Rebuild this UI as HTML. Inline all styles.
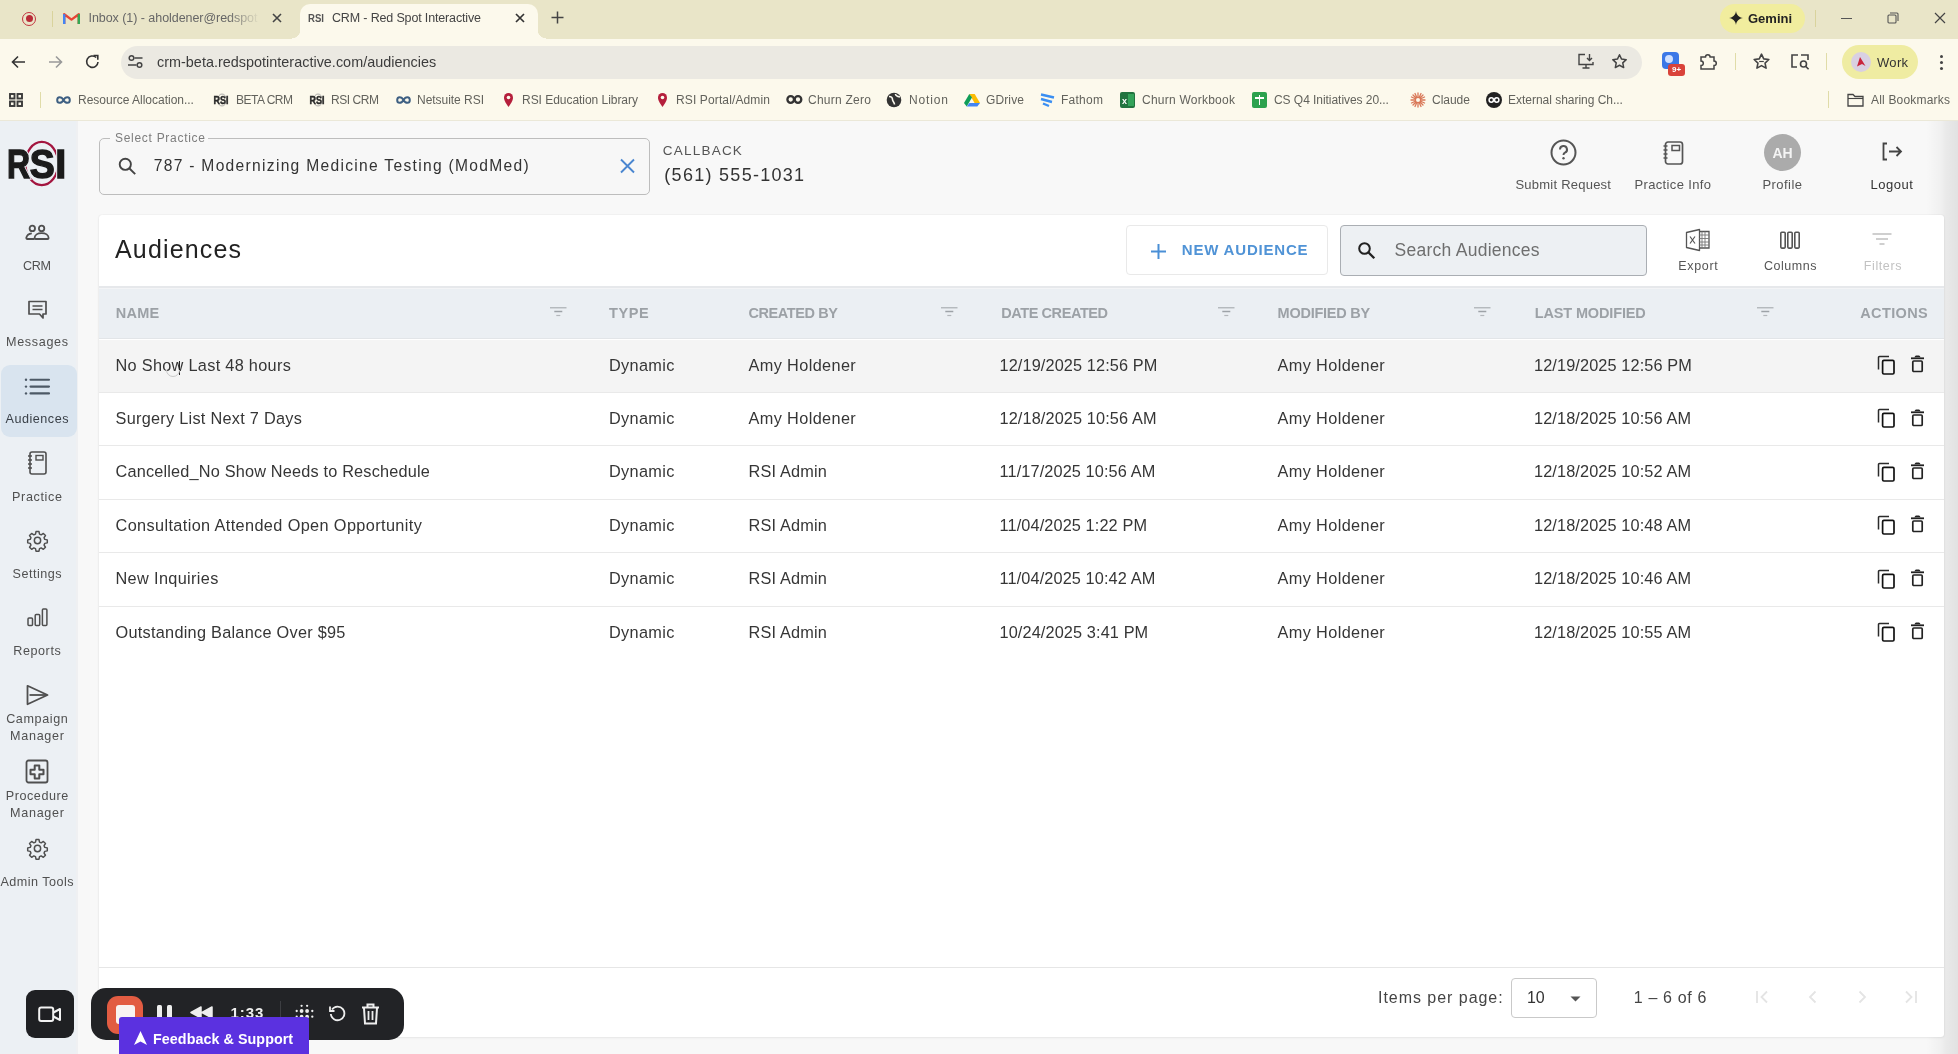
<!DOCTYPE html>
<html><head><meta charset="utf-8"><style>*{box-sizing:border-box;margin:0;padding:0}
html,body{width:1958px;height:1054px;overflow:hidden;background:#f6f6f6;font-family:"Liberation Sans",sans-serif}
.t{position:absolute;white-space:nowrap;line-height:1}
body{will-change:transform}
.a{position:absolute}
svg.a{overflow:visible}</style></head><body>
<div class="a" style="left:0;top:0;width:1958px;height:40px;background:#e9e5c8"></div>
<div class="a" style="left:0;top:39px;width:1958px;height:82px;background:#fcf9ec"></div>
<div class="a" style="left:0;top:120px;width:1958px;height:1px;background:#ebe8d8"></div>
<div class="a" style="left:22px;top:11.5px;width:14px;height:14px;border-radius:50%;border:1.8px solid #c2343f"></div>
<div class="a" style="left:25.5px;top:15px;width:7px;height:7px;border-radius:50%;background:#b92b38"></div>
<div class="a" style="left:52px;top:11px;width:1px;height:16px;background:#d9d39c"></div>
<svg class="a" style="left:63px;top:11px" width="17" height="14" viewBox="0 0 17 14"><path d="M1.2 13V3.2l7.3 5.4 7.3-5.4V13" fill="none" stroke="#ea4335" stroke-width="2.4" stroke-linejoin="round"/><path d="M1.2 13V3.2" stroke="#4285f4" stroke-width="2.4"/><path d="M15.8 13V3.2" stroke="#34a853" stroke-width="2.4"/></svg>
<div class="t" style="left:88.5px;top:12.42px;font-size:12.5px;color:#666;letter-spacing:-0.051px;">Inbox (1) - aholdener@redspot</div>
<div class="a" style="left:228px;top:6px;width:38px;height:28px;background:linear-gradient(90deg,rgba(233,229,200,0),#e9e5c8 85%)"></div>
<svg class="a" style="left:272px;top:13px" width="10" height="10" viewBox="0 0 10 10"><path d="M1 1l8 8M9 1L1 9" stroke="#444" stroke-width="1.6"/></svg>
<div class="a" style="left:300px;top:4px;width:238px;height:36px;background:#fcf9ec;border-radius:10px 10px 0 0"></div>
<div class="a" style="left:292px;top:30px;width:8px;height:10px;background:radial-gradient(circle at 0 0,#e9e5c8 8px,#fcf9ec 8.5px)"></div>
<div class="a" style="left:538px;top:30px;width:8px;height:10px;background:radial-gradient(circle at 100% 0,#e9e5c8 8px,#fcf9ec 8.5px)"></div>
<svg class="a" style="left:308px;top:11px" width="17" height="14" viewBox="0 0 17 14"><text x="0" y="11" font-family="Liberation Sans" font-weight="700" font-size="11" fill="#555" textLength="16" lengthAdjust="spacingAndGlyphs">RSI</text></svg>
<div class="t" style="left:332px;top:12.42px;font-size:12.5px;color:#444;letter-spacing:-0.154px;">CRM - Red Spot Interactive</div>
<svg class="a" style="left:515px;top:13px" width="10" height="10" viewBox="0 0 10 10"><path d="M1 1l8 8M9 1L1 9" stroke="#333" stroke-width="1.7"/></svg>
<svg class="a" style="left:551px;top:11px" width="13" height="13" viewBox="0 0 13 13"><path d="M6.5 0.5v12M0.5 6.5h12" stroke="#444" stroke-width="1.5"/></svg>
<div class="a" style="left:1720px;top:4px;width:85px;height:29px;border-radius:15px;background:#f1ed9e"></div>
<svg class="a" style="left:1729px;top:11px" width="14" height="14" viewBox="0 0 14 14"><path d="M7 0C7.5 4 10 6.5 14 7 10 7.5 7.5 10 7 14 6.5 10 4 7.5 0 7 4 6.5 6.5 4 7 0z" fill="#222"/></svg>
<div class="t" style="left:1748px;top:12.00px;font-size:13px;color:#222;font-weight:700;letter-spacing:-0.008px;">Gemini</div>
<div class="a" style="left:1815px;top:10px;width:1px;height:17px;background:#d9d39c"></div>
<div class="a" style="left:1841px;top:18px;width:11px;height:1px;background:#555"></div>
<svg class="a" style="left:1887px;top:12px" width="12" height="12" viewBox="0 0 12 12"><rect x="1" y="3" width="8" height="8" rx="1" fill="none" stroke="#555" stroke-width="1.1"/><path d="M3 1h7a1 1 0 0 1 1 1v7" fill="none" stroke="#555" stroke-width="1.1"/></svg>
<svg class="a" style="left:1934px;top:12px" width="12" height="12" viewBox="0 0 12 12"><path d="M1 1l10 10M11 1L1 11" stroke="#444" stroke-width="1.2"/></svg>
<svg class="a" style="left:10px;top:54px" width="17" height="16" viewBox="0 0 17 16"><path d="M15 8H2.5M8 2.5L2.5 8 8 13.5" fill="none" stroke="#333" stroke-width="1.6"/></svg>
<svg class="a" style="left:47px;top:54px" width="17" height="16" viewBox="0 0 17 16"><path d="M2 8h12.5M9 2.5L14.5 8 9 13.5" fill="none" stroke="#999" stroke-width="1.6"/></svg>
<svg class="a" style="left:84px;top:53px" width="17" height="17" viewBox="0 0 17 17"><path d="M14 9A5.7 5.7 0 1 1 12.2 4.5" fill="none" stroke="#333" stroke-width="1.6"/><path d="M9.5 2.5h4.3v4.3" fill="none" stroke="#333" stroke-width="1.6"/></svg>
<div class="a" style="left:121px;top:45.5px;width:1521px;height:33px;border-radius:17px;background:#ebe9e2"></div>
<svg class="a" style="left:127px;top:54px" width="17" height="15" viewBox="0 0 17 15"><circle cx="4.5" cy="4" r="2.3" fill="none" stroke="#444" stroke-width="1.5"/><path d="M7.5 4h8M1 11h8.5" stroke="#444" stroke-width="1.5"/><circle cx="12.5" cy="11" r="2.3" fill="none" stroke="#444" stroke-width="1.5"/></svg>
<div class="t" style="left:157px;top:54.81px;font-size:14.4px;color:#3c3c3c;letter-spacing:0.019px;">crm-beta.redspotinteractive.com/audiencies</div>
<svg class="a" style="left:1577px;top:53px" width="18" height="17" viewBox="0 0 18 17"><path d="M8 1.5H2v10h14V9M5.5 15h7M9 11.5V15" fill="none" stroke="#444" stroke-width="1.4"/><path d="M12.5 1v6.5M10 5l2.5 2.5L15 5" fill="none" stroke="#444" stroke-width="1.4"/></svg>
<svg class="a" style="left:1611px;top:53px" width="17" height="17" viewBox="0 0 24 24"><path d="M12 2.5l2.9 6.1 6.6.8-4.9 4.6 1.3 6.6L12 17.3l-5.9 3.3 1.3-6.6-4.9-4.6 6.6-.8z" fill="none" stroke="#444" stroke-width="2.1" stroke-linejoin="round"/></svg>
<div class="a" style="left:1662px;top:52px;width:17px;height:17px;border-radius:4px;background:#3b78e7"></div>
<div class="a" style="left:1665px;top:55px;width:8px;height:8px;border-radius:50%;background:#cfe0ff"></div>
<div class="a" style="left:1668px;top:64px;width:17px;height:12px;border-radius:3px;background:#d9433a;color:#fff;font-size:8px;line-height:12px;text-align:center;font-weight:700">9+</div>
<svg class="a" style="left:1699px;top:52px" width="19" height="19" viewBox="0 0 19 19"><path d="M2 5h4.5a2.3 2.3 0 0 1 4.6 0H15v4a2.3 2.3 0 0 1 0 4.6V17H2v-3.5a2.3 2.3 0 0 0 0-4.6z" fill="none" stroke="#444" stroke-width="1.5"/></svg>
<div class="a" style="left:1735px;top:53px;width:1px;height:17px;background:#e0dca8"></div>
<svg class="a" style="left:1752px;top:53px" width="19" height="17" viewBox="0 0 24 22"><path d="M12 1.5l2.9 6.1 6.6.8-4.9 4.6 1.3 6.6L12 16.3l-5.9 3.3 1.3-6.6-4.9-4.6 6.6-.8z" fill="none" stroke="#444" stroke-width="2.1" stroke-linejoin="round"/><path d="M9 11h6" stroke="#444" stroke-width="1.5"/></svg>
<svg class="a" style="left:1790px;top:53px" width="20" height="17" viewBox="0 0 20 17"><path d="M8 2H2v12h5M11 2h7v5" fill="none" stroke="#444" stroke-width="1.6"/><circle cx="13.5" cy="11" r="3" fill="none" stroke="#444" stroke-width="1.6"/><path d="M15.6 13.2l3 3" stroke="#444" stroke-width="1.6"/></svg>
<div class="a" style="left:1826px;top:53px;width:1px;height:17px;background:#e0dca8"></div>
<div class="a" style="left:1841.5px;top:45px;width:76px;height:33.5px;border-radius:17px;background:#efeca2"></div>
<div class="a" style="left:1851px;top:52px;width:20px;height:20px;border-radius:50%;background:#d9d0e2"></div>
<svg class="a" style="left:1853px;top:54px" width="16" height="16" viewBox="0 0 16 16"><path d="M4 12.5L7 3l5.5 9-3.5-2z" fill="#c8243c"/></svg>
<div class="t" style="left:1877px;top:56.00px;font-size:13px;color:#333;letter-spacing:0.310px;">Work</div>
<div class="a" style="left:1940px;top:55px;width:3px;height:3px;border-radius:50%;background:#444;box-shadow:0 6px 0 #444,0 12px 0 #444"></div>
<svg class="a" style="left:9px;top:93px" width="14" height="14" viewBox="0 0 14 14"><g fill="none" stroke="#3a3a3a" stroke-width="1.9"><rect x="1" y="1" width="4.5" height="4.5"/><rect x="8.5" y="1" width="4.5" height="4.5"/><rect x="1" y="8.5" width="4.5" height="4.5"/><rect x="8.5" y="8.5" width="4.5" height="4.5"/></g></svg>
<div class="a" style="left:40px;top:92px;width:1px;height:16px;background:#e0dca8"></div>
<svg class="a" style="left:56px;top:95px" width="15" height="10" viewBox="0 0 15 10"><path d="M7.5 5C5.5 1.2 1.2 1.2 1.2 5s4.3 3.8 6.3 0 6.3-3.8 6.3 0-4.3 3.8-6.3 0" fill="none" stroke="#3d5f82" stroke-width="2"/></svg>
<div class="t" style="left:78px;top:93.84px;font-size:12px;color:#62625c;letter-spacing:-0.005px;">Resource Allocation...</div>
<svg class="a" style="left:213px;top:92px" width="16" height="16" viewBox="0 0 16 16"><ellipse cx="9" cy="8" rx="4.5" ry="6" fill="none" stroke="#999" stroke-width="0.8"/><text x="0.5" y="12" font-family="Liberation Sans" font-weight="700" font-size="10" fill="#2a2a2a" stroke="#2a2a2a" stroke-width="0.4" textLength="15" lengthAdjust="spacingAndGlyphs">RSI</text></svg>
<div class="t" style="left:236px;top:93.84px;font-size:12px;color:#62625c;letter-spacing:-0.499px;">BETA CRM</div>
<svg class="a" style="left:309px;top:92px" width="16" height="16" viewBox="0 0 16 16"><ellipse cx="9" cy="8" rx="4.5" ry="6" fill="none" stroke="#999" stroke-width="0.8"/><text x="0.5" y="12" font-family="Liberation Sans" font-weight="700" font-size="10" fill="#2a2a2a" stroke="#2a2a2a" stroke-width="0.4" textLength="15" lengthAdjust="spacingAndGlyphs">RSI</text></svg>
<div class="t" style="left:331px;top:93.84px;font-size:12px;color:#62625c;letter-spacing:-0.452px;">RSI CRM</div>
<svg class="a" style="left:396px;top:95px" width="15" height="10" viewBox="0 0 15 10"><path d="M7.5 5C5.5 1.2 1.2 1.2 1.2 5s4.3 3.8 6.3 0 6.3-3.8 6.3 0-4.3 3.8-6.3 0" fill="none" stroke="#3d5f82" stroke-width="2"/></svg>
<div class="t" style="left:417px;top:93.84px;font-size:12px;color:#62625c;letter-spacing:-0.036px;">Netsuite RSI</div>
<svg class="a" style="left:503px;top:92px" width="11" height="16" viewBox="0 0 11 16"><path d="M5.5 15C2 10 1 8 1 5.5a4.5 4.5 0 0 1 9 0C10 8 9 10 5.5 15z" fill="#b51f3c"/><circle cx="5.5" cy="5.5" r="1.8" fill="#fcf9ec"/></svg>
<div class="t" style="left:522px;top:93.84px;font-size:12px;color:#62625c;letter-spacing:-0.039px;">RSI Education Library</div>
<svg class="a" style="left:657px;top:92px" width="11" height="16" viewBox="0 0 11 16"><path d="M5.5 15C2 10 1 8 1 5.5a4.5 4.5 0 0 1 9 0C10 8 9 10 5.5 15z" fill="#b51f3c"/><circle cx="5.5" cy="5.5" r="1.8" fill="#fcf9ec"/></svg>
<div class="t" style="left:676px;top:93.84px;font-size:12px;color:#62625c;letter-spacing:0.128px;">RSI Portal/Admin</div>
<svg class="a" style="left:786px;top:94px" width="17" height="11" viewBox="0 0 17 11"><circle cx="4.7" cy="5.5" r="3.3" fill="none" stroke="#333" stroke-width="2.3"/><circle cx="12" cy="5.5" r="3.3" fill="none" stroke="#333" stroke-width="2.3"/></svg>
<div class="t" style="left:808px;top:93.84px;font-size:12px;color:#62625c;letter-spacing:0.251px;">Churn Zero</div>
<svg class="a" style="left:886px;top:92px" width="16" height="16" viewBox="0 0 16 16"><circle cx="8" cy="8" r="7.3" fill="#333"/><path d="M3 4.5c2 0 3.5 1 3.5 3s2 2.5 2 5M9.5 2c0 2 2 2.5 4.5 3" fill="none" stroke="#fbf9ef" stroke-width="1.6"/></svg>
<div class="t" style="left:909px;top:93.84px;font-size:12px;color:#62625c;letter-spacing:0.855px;">Notion</div>
<svg class="a" style="left:964px;top:93px" width="16" height="14" viewBox="0 0 16 14"><path d="M5.3 1h5.4l5.3 9h-5.4z" fill="#fbbc04"/><path d="M5.3 1L0 10l2.7 3.5L8 4.5z" fill="#0f9d58"/><path d="M2.7 13.5h10.6L16 10H5.4z" fill="#4285f4"/></svg>
<div class="t" style="left:986px;top:93.84px;font-size:12px;color:#62625c;letter-spacing:0.123px;">GDrive</div>
<svg class="a" style="left:1040px;top:92px" width="15" height="16" viewBox="0 0 15 16"><path d="M1 2.5l13 3M1 7l11 3M3 11.5l6 2.5" stroke="#3a8ef2" stroke-width="2.4"/></svg>
<div class="t" style="left:1061px;top:93.84px;font-size:12px;color:#62625c;letter-spacing:0.255px;">Fathom</div>
<div class="a" style="left:1120px;top:92px;width:15px;height:16px;border-radius:2px;background:#21733f"></div>
<div class="a" style="left:1128px;top:94px;width:6px;height:12px;background:#33a35a"></div>
<div class="t" style="left:1122px;top:97px;font-size:9px;color:#fff;font-weight:700;line-height:1">x</div>
<div class="t" style="left:1142px;top:93.84px;font-size:12px;color:#62625c;letter-spacing:0.241px;">Churn Workbook</div>
<div class="a" style="left:1252px;top:92px;width:15px;height:16px;border-radius:2px;background:#2ca24e"></div>
<div class="a" style="left:1255px;top:97px;width:9px;height:1.6px;background:#fff"></div>
<div class="a" style="left:1258.5px;top:95px;width:1.6px;height:10px;background:#fff"></div>
<div class="t" style="left:1274px;top:93.84px;font-size:12px;color:#62625c;letter-spacing:-0.050px;">CS Q4 Initiatives 20...</div>
<svg class="a" style="left:1410px;top:92px" width="16" height="16" viewBox="0 0 16 16"><g stroke="#d97757" stroke-width="1.3" stroke-linecap="round"><path d="M8 1v14M1 8h14M3 3l10 10M13 3L3 13M5 1.5l6 13M11 1.5l-6 13M1.5 5l13 6M1.5 11l13-6"/></g><circle cx="8" cy="8" r="2" fill="#fcf9ec"/></svg>
<div class="t" style="left:1432px;top:93.84px;font-size:12px;color:#62625c;letter-spacing:-0.014px;">Claude</div>
<div class="a" style="left:1486px;top:92px;width:16px;height:16px;border-radius:50%;background:#222"></div>
<svg class="a" style="left:1488px;top:96px" width="12" height="8" viewBox="0 0 12 8"><circle cx="3.3" cy="4" r="2.2" fill="none" stroke="#fff" stroke-width="1.5"/><circle cx="8.7" cy="4" r="2.2" fill="none" stroke="#fff" stroke-width="1.5"/></svg>
<div class="t" style="left:1508px;top:93.84px;font-size:12px;color:#62625c;letter-spacing:-0.021px;">External sharing Ch...</div>
<div class="a" style="left:1828px;top:91px;width:1px;height:17px;background:#e0dca8"></div>
<svg class="a" style="left:1847px;top:93px" width="17" height="14" viewBox="0 0 17 14"><path d="M1 1.5h5l2 2h8v9.5H1z" fill="none" stroke="#444" stroke-width="1.3"/><path d="M1 5.5h15" stroke="#444" stroke-width="1.1"/></svg>
<div class="t" style="left:1871px;top:93.84px;font-size:12px;color:#62625c;letter-spacing:0.189px;">All Bookmarks</div>
<div class="a" style="left:0;top:121px;width:77px;height:933px;background:#ecf0f4"></div>
<div class="a" style="left:77px;top:121px;width:1881px;height:933px;background:#f8f8f8"></div>
<div class="a" style="left:76px;top:121px;width:2px;height:933px;background:#eff0f2"></div>
<div class="a" style="left:1926px;top:121px;width:32px;height:933px;background:linear-gradient(90deg,rgba(0,0,0,0) 0%,rgba(0,0,0,0.03) 45%,rgba(0,0,0,0.06) 62%,rgba(0,0,0,0.09) 100%)"></div>
<svg class="a" style="left:0;top:130px" width="77" height="70" viewBox="0 130 77 70"><ellipse cx="41.8" cy="163.5" rx="16.4" ry="21.6" fill="none" stroke="#a3153f" stroke-width="2.2"/><text x="7" y="178" font-family="Liberation Sans" font-weight="700" font-size="40" fill="#ecf0f4" stroke="#ecf0f4" stroke-width="3.5" textLength="23" lengthAdjust="spacingAndGlyphs">R</text><text x="29.8" y="178" font-family="Liberation Sans" font-weight="700" font-size="40" fill="#ecf0f4" stroke="#ecf0f4" stroke-width="3.5" textLength="25" lengthAdjust="spacingAndGlyphs">S</text><text x="55.3" y="178" font-family="Liberation Sans" font-weight="700" font-size="40" fill="#ecf0f4" stroke="#ecf0f4" stroke-width="3.5" textLength="11" lengthAdjust="spacingAndGlyphs">I</text><text x="7" y="178" font-family="Liberation Sans" font-weight="700" font-size="40" fill="#1b1b1b" stroke="#1b1b1b" stroke-width="1.4" textLength="23" lengthAdjust="spacingAndGlyphs">R</text><text x="29.8" y="178" font-family="Liberation Sans" font-weight="700" font-size="40" fill="#1b1b1b" stroke="#1b1b1b" stroke-width="1.4" textLength="25" lengthAdjust="spacingAndGlyphs">S</text><text x="55.3" y="178" font-family="Liberation Sans" font-weight="700" font-size="40" fill="#1b1b1b" stroke="#1b1b1b" stroke-width="1.4" textLength="11" lengthAdjust="spacingAndGlyphs">I</text></svg>
<div class="a" style="left:1px;top:365px;width:76px;height:72px;background:#d9e4ef;border-radius:9px"></div>
<svg class="a" style="left:25px;top:224px" width="24" height="17" viewBox="0 0 24 17"><circle cx="7.3" cy="4.4" r="2.7" fill="none" stroke="#4f4f4f" stroke-width="1.8"/><circle cx="16.6" cy="4.4" r="2.7" fill="none" stroke="#4f4f4f" stroke-width="1.8"/><path d="M9.5 15H2.3a1 1 0 0 1-1-1.2C1.8 11.2 3.8 9.6 6.8 9.3" fill="none" stroke="#4f4f4f" stroke-width="1.8"/><path d="M9.6 14c0-3 3-4.9 7-4.9s7 1.9 7 4.9a1 1 0 0 1-1 1H10.6a1 1 0 0 1-1-1z" fill="none" stroke="#4f4f4f" stroke-width="1.8"/></svg>
<div class="t" style="left:23.0px;top:259.63px;font-size:12.6px;color:#505050;letter-spacing:-0.340px;">CRM</div>
<svg class="a" style="left:27px;top:300px" width="21" height="20" viewBox="0 0 21 20"><path d="M2 1.5h17v12.5h-3v4l-3.5-4H2z" fill="none" stroke="#4f4f4f" stroke-width="1.7" stroke-linejoin="round"/><path d="M5.5 6h10M5.5 9.5h10" stroke="#4f4f4f" stroke-width="1.7"/></svg>
<div class="t" style="left:6.0px;top:335.63px;font-size:12.6px;color:#505050;letter-spacing:0.657px;">Messages</div>
<svg class="a" style="left:24px;top:377px" width="26" height="18" viewBox="0 0 26 18"><g fill="#4d5966"><circle cx="2" cy="2.8" r="1.2"/><circle cx="2" cy="9.6" r="1.2"/><circle cx="2" cy="16.4" r="1.2"/></g><path d="M6.5 2.8h18.5M6.5 9.6h18.5M6.5 16.4h18.5" stroke="#4d5966" stroke-width="2.1" stroke-linecap="round"/></svg>
<div class="t" style="left:5.5px;top:412.63px;font-size:12.6px;color:#3a4048;letter-spacing:0.524px;">Audiences</div>
<svg class="a" style="left:27px;top:451px" width="21" height="24" viewBox="0 0 21 24"><rect x="3" y="1" width="16" height="22" rx="2" fill="none" stroke="#4f4f4f" stroke-width="1.6"/><rect x="9" y="4.5" width="7" height="4.5" fill="none" stroke="#4f4f4f" stroke-width="1.4"/><path d="M1 5h4M1 9h4M1 13h4M1 17h4" stroke="#4f4f4f" stroke-width="1.4"/></svg>
<div class="t" style="left:12.0px;top:490.63px;font-size:12.6px;color:#505050;letter-spacing:0.644px;">Practice</div>
<svg class="a" style="left:26.5px;top:530px" width="21" height="21" viewBox="0 0 24 24"><path d="M10.3 1.8h3.4l.6 2.9 1.9.8 2.5-1.6 2.4 2.4-1.6 2.5.8 1.9 2.9.6v3.4l-2.9.6-.8 1.9 1.6 2.5-2.4 2.4-2.5-1.6-1.9.8-.6 2.9h-3.4l-.6-2.9-1.9-.8-2.5 1.6-2.4-2.4 1.6-2.5-.8-1.9-2.9-.6v-3.4l2.9-.6.8-1.9-1.6-2.5 2.4-2.4 2.5 1.6 1.9-.8z" fill="none" stroke="#4f4f4f" stroke-width="1.7" stroke-linejoin="round"/><circle cx="12" cy="12" r="3.6" fill="none" stroke="#4f4f4f" stroke-width="1.7"/></svg>
<div class="t" style="left:12.5px;top:567.63px;font-size:12.6px;color:#505050;letter-spacing:0.499px;">Settings</div>
<svg class="a" style="left:27px;top:608px" width="21" height="19" viewBox="0 0 21 19"><rect x="1" y="10" width="4.5" height="7.5" rx="1" fill="none" stroke="#4f4f4f" stroke-width="1.5"/><rect x="8.2" y="6.5" width="4.5" height="11" rx="1" fill="none" stroke="#4f4f4f" stroke-width="1.5"/><rect x="15.4" y="1" width="4.5" height="16.5" rx="1" fill="none" stroke="#4f4f4f" stroke-width="1.5"/></svg>
<div class="t" style="left:13.25px;top:644.63px;font-size:12.6px;color:#505050;letter-spacing:0.566px;">Reports</div>
<svg class="a" style="left:25px;top:684px" width="24" height="22" viewBox="0 0 24 22"><path d="M2.5 1.8L22.5 11 2.5 20.2z" fill="none" stroke="#4f4f4f" stroke-width="1.8" stroke-linejoin="round"/><path d="M4.5 11h17" stroke="#4f4f4f" stroke-width="1.8"/></svg>
<div class="t" style="left:6.15px;top:713.03px;font-size:12.6px;color:#505050;letter-spacing:0.615px;">Campaign</div>
<div class="t" style="left:10.1px;top:729.63px;font-size:12.6px;color:#505050;letter-spacing:0.682px;">Manager</div>
<svg class="a" style="left:25px;top:759px" width="24" height="25" viewBox="0 0 24 25"><rect x="1.5" y="1.5" width="21" height="22" rx="2" fill="none" stroke="#4f4f4f" stroke-width="1.8"/><path d="M9.7 6.5h4.6v4.2h4.2v4.6h-4.2v4.2H9.7v-4.2H5.5v-4.6h4.2z" fill="none" stroke="#4f4f4f" stroke-width="2" stroke-linejoin="round"/></svg>
<div class="t" style="left:5.7px;top:790.23px;font-size:12.6px;color:#505050;letter-spacing:0.562px;">Procedure</div>
<div class="t" style="left:10.1px;top:806.63px;font-size:12.6px;color:#505050;letter-spacing:0.682px;">Manager</div>
<svg class="a" style="left:26.5px;top:837.5px" width="21" height="21" viewBox="0 0 24 24"><path d="M10.3 1.8h3.4l.6 2.9 1.9.8 2.5-1.6 2.4 2.4-1.6 2.5.8 1.9 2.9.6v3.4l-2.9.6-.8 1.9 1.6 2.5-2.4 2.4-2.5-1.6-1.9.8-.6 2.9h-3.4l-.6-2.9-1.9-.8-2.5 1.6-2.4-2.4 1.6-2.5-.8-1.9-2.9-.6v-3.4l2.9-.6.8-1.9-1.6-2.5 2.4-2.4 2.5 1.6 1.9-.8z" fill="none" stroke="#4f4f4f" stroke-width="1.7" stroke-linejoin="round"/><circle cx="12" cy="12" r="3.6" fill="none" stroke="#4f4f4f" stroke-width="1.7"/></svg>
<div class="t" style="left:0.5px;top:875.63px;font-size:12.6px;color:#505050;letter-spacing:0.463px;">Admin Tools</div>
<div class="a" style="left:98.5px;top:137.5px;width:551px;height:57px;border:1.2px solid #bdbdbd;border-radius:5px;background:#f7f7f7"></div>
<div class="a" style="left:110px;top:133px;width:98px;height:10px;background:#f8f8f8"></div>
<div class="t" style="left:115px;top:132.14px;font-size:12px;color:#7d7d7d;letter-spacing:0.708px;">Select Practice</div>
<svg class="a" style="left:118px;top:157px" width="19" height="18" viewBox="0 0 19 18"><circle cx="7.3" cy="7.3" r="5.6" fill="none" stroke="#444" stroke-width="1.9"/><path d="M11.5 11.5l5.7 5.7" stroke="#444" stroke-width="1.9"/></svg>
<div class="t" style="left:153.7px;top:158.39px;font-size:15.6px;color:#333;letter-spacing:1.299px;">787 - Modernizing Medicine Testing (ModMed)</div>
<svg class="a" style="left:620px;top:159px" width="15" height="14" viewBox="0 0 15 14"><path d="M1 0.5l13 13M14 0.5L1 13.5" stroke="#4a86d0" stroke-width="1.9"/></svg>
<div class="t" style="left:662.8px;top:144.17px;font-size:13.5px;color:#555;letter-spacing:1.219px;">CALLBACK</div>
<div class="t" style="left:664.3px;top:165.86px;font-size:18px;color:#333;letter-spacing:1.288px;">(561) 555-1031</div>
<svg class="a" style="left:1550px;top:139px" width="27" height="27" viewBox="0 0 27 27"><circle cx="13.5" cy="13.5" r="12" fill="none" stroke="#555" stroke-width="2"/><path d="M10 10.5a3.5 3.5 0 1 1 5 3.2c-1 .5-1.5 1-1.5 2.3" fill="none" stroke="#555" stroke-width="2"/><circle cx="13.5" cy="19.3" r="1.2" fill="#555"/></svg>
<div class="t" style="left:1515.43px;top:178.00px;font-size:13px;color:#555;letter-spacing:0.234px;">Submit Request</div>
<svg class="a" style="left:1662px;top:141px" width="22" height="24" viewBox="0 0 22 24"><rect x="3.5" y="1" width="17" height="22" rx="2.5" fill="none" stroke="#555" stroke-width="1.7"/><rect x="10" y="4.5" width="7.5" height="5" fill="none" stroke="#555" stroke-width="1.5"/><path d="M1.5 5h4M1.5 9h4M1.5 13h4M1.5 17h4" stroke="#555" stroke-width="1.5"/></svg>
<div class="t" style="left:1634.43px;top:178.00px;font-size:13px;color:#555;letter-spacing:0.356px;">Practice Info</div>
<div class="a" style="left:1764px;top:134px;width:37px;height:37px;border-radius:50%;background:#ababab"></div>
<div class="t" style="left:1764px;top:146px;width:37px;text-align:center;font-size:14px;font-weight:700;color:#f4f4f4;line-height:1">AH</div>
<div class="t" style="left:1762.43px;top:178.00px;font-size:13px;color:#555;letter-spacing:0.447px;">Profile</div>
<svg class="a" style="left:1882px;top:142px" width="21" height="19" viewBox="0 0 21 19"><path d="M5 1.5H1.5v16H5" fill="none" stroke="#444" stroke-width="1.8"/><path d="M7 9.5h12M14.5 5l4.5 4.5-4.5 4.5" fill="none" stroke="#444" stroke-width="1.8"/></svg>
<div class="t" style="left:1870.48px;top:178.00px;font-size:13px;color:#333;letter-spacing:0.535px;">Logout</div>
<div class="a" style="left:98.5px;top:215px;width:1845px;height:821.5px;background:#fff;border-radius:3px;box-shadow:0 1px 3px rgba(0,0,0,0.06),0 0 1.5px rgba(0,0,0,0.1)"></div>
<div class="t" style="left:115px;top:237.44px;font-size:25px;color:#222;letter-spacing:1.156px;">Audiences</div>
<div class="a" style="left:1125.5px;top:224.5px;width:202px;height:50.5px;border:1px solid #e9e9e9;border-radius:4px;background:#fff"></div>
<svg class="a" style="left:1150px;top:242.5px" width="17" height="17" viewBox="0 0 17 17"><path d="M8.5 1v15M1 8.5h15" stroke="#4a8fd6" stroke-width="2"/></svg>
<div class="t" style="left:1181.8px;top:242.30px;font-size:15px;color:#5093d6;font-weight:700;letter-spacing:0.804px;">NEW AUDIENCE</div>
<div class="a" style="left:1339.5px;top:224.5px;width:307px;height:51.5px;border:1.2px solid #aaaeb3;border-radius:4px;background:#edf0f3"></div>
<svg class="a" style="left:1357px;top:241px" width="20" height="19" viewBox="0 0 20 19"><circle cx="7.5" cy="7.5" r="5.3" fill="none" stroke="#222" stroke-width="2"/><path d="M11.3 11.3l6 6" stroke="#222" stroke-width="2.3"/></svg>
<div class="t" style="left:1394.5px;top:241.69px;font-size:17.5px;color:#6e6e6e;letter-spacing:0.268px;">Search Audiences</div>
<svg class="a" style="left:1685px;top:228px" width="26" height="24" viewBox="0 0 26 24"><path d="M1.5 4.5L14.5 1.5v21l-13-3z" fill="none" stroke="#555" stroke-width="1.3" stroke-linejoin="round"/><path d="M14.5 3.5h9.5v16.5h-9.5" fill="none" stroke="#555" stroke-width="1.3"/><path d="M17 3.5v16.5M20 3.5v16.5M14.5 7h9.5M14.5 10.5h9.5M14.5 14h9.5M14.5 17h9.5" stroke="#777" stroke-width="0.9"/><path d="M5 8.5l5 7M10 8.5l-5 7" stroke="#555" stroke-width="1.2"/></svg>
<div class="t" style="left:1678.3px;top:260.12px;font-size:12.5px;color:#555;letter-spacing:0.672px;">Export</div>
<svg class="a" style="left:1779px;top:230.5px" width="22" height="19" viewBox="0 0 22 19"><rect x="1.8" y="1.3" width="4.4" height="15.8" rx="1" fill="none" stroke="#555" stroke-width="1.6"/><rect x="8.8" y="1.3" width="4.4" height="15.8" rx="1" fill="none" stroke="#555" stroke-width="1.6"/><rect x="15.8" y="1.3" width="4.4" height="15.8" rx="1" fill="none" stroke="#555" stroke-width="1.6"/></svg>
<div class="t" style="left:1764px;top:260.12px;font-size:12.5px;color:#555;letter-spacing:0.512px;">Columns</div>
<svg class="a" style="left:1872px;top:232px" width="20" height="15" viewBox="0 0 20 15"><path d="M0.5 2h19M4 7h12M7.5 12h5" stroke="#c0c0c0" stroke-width="1.7"/></svg>
<div class="t" style="left:1863.8px;top:260.12px;font-size:12.5px;color:#c2c2c2;letter-spacing:0.595px;">Filters</div>
<div class="a" style="left:98.5px;top:286px;width:1845px;height:53px;background:#ebeff3;border-top:2px solid #e6e8eb;border-bottom:1px solid #e2e5e8"></div>
<div class="a" style="left:98.5px;top:288px;width:1845px;height:1px;background:#f3f4f6"></div>
<div class="t" style="left:115.8px;top:305.73px;font-size:14.5px;color:#9ca1a6;font-weight:700;letter-spacing:0.219px;">NAME</div>
<div class="t" style="left:609px;top:305.73px;font-size:14.5px;color:#9ca1a6;font-weight:700;letter-spacing:0.628px;">TYPE</div>
<div class="t" style="left:748.5px;top:305.73px;font-size:14.5px;color:#9ca1a6;font-weight:700;letter-spacing:-0.425px;">CREATED BY</div>
<div class="t" style="left:1001.2px;top:305.73px;font-size:14.5px;color:#9ca1a6;font-weight:700;letter-spacing:-0.416px;">DATE CREATED</div>
<div class="t" style="left:1277.6px;top:305.73px;font-size:14.5px;color:#9ca1a6;font-weight:700;letter-spacing:-0.250px;">MODIFIED BY</div>
<div class="t" style="left:1534.7px;top:305.73px;font-size:14.5px;color:#9ca1a6;font-weight:700;letter-spacing:-0.135px;">LAST MODIFIED</div>
<div class="t" style="left:1860.3px;top:305.73px;font-size:14.5px;color:#9ca1a6;font-weight:700;letter-spacing:0.352px;">ACTIONS</div>
<svg class="a" style="left:549.7px;top:305.5px" width="17" height="11" viewBox="0 0 17 11"><path d="M0 1.8h16.5" stroke="#a3a8ad" stroke-width="1.1"/><path d="M4.3 5.5h8" stroke="#9da2a7" stroke-width="1.5"/><path d="M6.3 9.5h4" stroke="#b3b7bb" stroke-width="1.2"/></svg>
<svg class="a" style="left:940.7px;top:305.5px" width="17" height="11" viewBox="0 0 17 11"><path d="M0 1.8h16.5" stroke="#a3a8ad" stroke-width="1.1"/><path d="M4.3 5.5h8" stroke="#9da2a7" stroke-width="1.5"/><path d="M6.3 9.5h4" stroke="#b3b7bb" stroke-width="1.2"/></svg>
<svg class="a" style="left:1217.7px;top:305.5px" width="17" height="11" viewBox="0 0 17 11"><path d="M0 1.8h16.5" stroke="#a3a8ad" stroke-width="1.1"/><path d="M4.3 5.5h8" stroke="#9da2a7" stroke-width="1.5"/><path d="M6.3 9.5h4" stroke="#b3b7bb" stroke-width="1.2"/></svg>
<svg class="a" style="left:1474.2px;top:305.5px" width="17" height="11" viewBox="0 0 17 11"><path d="M0 1.8h16.5" stroke="#a3a8ad" stroke-width="1.1"/><path d="M4.3 5.5h8" stroke="#9da2a7" stroke-width="1.5"/><path d="M6.3 9.5h4" stroke="#b3b7bb" stroke-width="1.2"/></svg>
<svg class="a" style="left:1757.3px;top:305.5px" width="17" height="11" viewBox="0 0 17 11"><path d="M0 1.8h16.5" stroke="#a3a8ad" stroke-width="1.1"/><path d="M4.3 5.5h8" stroke="#9da2a7" stroke-width="1.5"/><path d="M6.3 9.5h4" stroke="#b3b7bb" stroke-width="1.2"/></svg>
<div class="a" style="left:98.5px;top:340.0px;width:1845px;height:52.4px;background:#f4f4f4"></div>
<div class="a" style="left:98.5px;top:391.9px;width:1845px;height:1px;background:#e9e9e9"></div>
<div class="t" style="left:115.5px;top:356.50px;font-size:16.3px;color:#363636;letter-spacing:0.303px;">No Show Last 48 hours</div>
<div class="t" style="left:609px;top:356.50px;font-size:16.3px;color:#363636;letter-spacing:0.327px;">Dynamic</div>
<div class="t" style="left:748.5px;top:356.50px;font-size:16.3px;color:#363636;letter-spacing:0.376px;">Amy Holdener</div>
<div class="t" style="left:999.5px;top:356.50px;font-size:16.3px;color:#363636;letter-spacing:0.12px;">12/19/2025 12:56 PM</div>
<div class="t" style="left:1277.5px;top:356.50px;font-size:16.3px;color:#363636;letter-spacing:0.376px;">Amy Holdener</div>
<div class="t" style="left:1534px;top:356.50px;font-size:16.3px;color:#363636;letter-spacing:0.12px;">12/19/2025 12:56 PM</div>
<svg class="a" style="left:1876.5px;top:355.0px" width="20" height="21" viewBox="0 0 20 21"><path d="M1.5 14.5V2.5a1 1 0 0 1 1-1h9.5" fill="none" stroke="#2b2b2b" stroke-width="1.5"/><rect x="5.6" y="5.4" width="11.4" height="13.6" rx="1.3" fill="none" stroke="#111" stroke-width="1.7"/></svg>
<svg class="a" style="left:1910px;top:355.2px" width="15" height="18" viewBox="0 0 15 18"><path d="M1 3.3h13" stroke="#222" stroke-width="1.8"/><path d="M5 2.3l.6-1.3h3.8l.6 1.3" fill="#222" stroke="#222" stroke-width="1"/><rect x="2.8" y="6" width="9.4" height="10.5" rx="1" fill="none" stroke="#222" stroke-width="1.7"/></svg>
<div class="a" style="left:98.5px;top:445.3px;width:1845px;height:1px;background:#e9e9e9"></div>
<div class="t" style="left:115.5px;top:409.90px;font-size:16.3px;color:#363636;letter-spacing:0.271px;">Surgery List Next 7 Days</div>
<div class="t" style="left:609px;top:409.90px;font-size:16.3px;color:#363636;letter-spacing:0.327px;">Dynamic</div>
<div class="t" style="left:748.5px;top:409.90px;font-size:16.3px;color:#363636;letter-spacing:0.376px;">Amy Holdener</div>
<div class="t" style="left:999.5px;top:409.90px;font-size:16.3px;color:#363636;letter-spacing:0.12px;">12/18/2025 10:56 AM</div>
<div class="t" style="left:1277.5px;top:409.90px;font-size:16.3px;color:#363636;letter-spacing:0.376px;">Amy Holdener</div>
<div class="t" style="left:1534px;top:409.90px;font-size:16.3px;color:#363636;letter-spacing:0.12px;">12/18/2025 10:56 AM</div>
<svg class="a" style="left:1876.5px;top:408.4px" width="20" height="21" viewBox="0 0 20 21"><path d="M1.5 14.5V2.5a1 1 0 0 1 1-1h9.5" fill="none" stroke="#2b2b2b" stroke-width="1.5"/><rect x="5.6" y="5.4" width="11.4" height="13.6" rx="1.3" fill="none" stroke="#111" stroke-width="1.7"/></svg>
<svg class="a" style="left:1910px;top:408.6px" width="15" height="18" viewBox="0 0 15 18"><path d="M1 3.3h13" stroke="#222" stroke-width="1.8"/><path d="M5 2.3l.6-1.3h3.8l.6 1.3" fill="#222" stroke="#222" stroke-width="1"/><rect x="2.8" y="6" width="9.4" height="10.5" rx="1" fill="none" stroke="#222" stroke-width="1.7"/></svg>
<div class="a" style="left:98.5px;top:498.7px;width:1845px;height:1px;background:#e9e9e9"></div>
<div class="t" style="left:115.5px;top:463.30px;font-size:16.3px;color:#363636;letter-spacing:0.182px;">Cancelled_No Show Needs to Reschedule</div>
<div class="t" style="left:609px;top:463.30px;font-size:16.3px;color:#363636;letter-spacing:0.327px;">Dynamic</div>
<div class="t" style="left:748.5px;top:463.30px;font-size:16.3px;color:#363636;letter-spacing:0.173px;">RSI Admin</div>
<div class="t" style="left:999.5px;top:463.30px;font-size:16.3px;color:#363636;letter-spacing:0.12px;">11/17/2025 10:56 AM</div>
<div class="t" style="left:1277.5px;top:463.30px;font-size:16.3px;color:#363636;letter-spacing:0.376px;">Amy Holdener</div>
<div class="t" style="left:1534px;top:463.30px;font-size:16.3px;color:#363636;letter-spacing:0.12px;">12/18/2025 10:52 AM</div>
<svg class="a" style="left:1876.5px;top:461.8px" width="20" height="21" viewBox="0 0 20 21"><path d="M1.5 14.5V2.5a1 1 0 0 1 1-1h9.5" fill="none" stroke="#2b2b2b" stroke-width="1.5"/><rect x="5.6" y="5.4" width="11.4" height="13.6" rx="1.3" fill="none" stroke="#111" stroke-width="1.7"/></svg>
<svg class="a" style="left:1910px;top:462.0px" width="15" height="18" viewBox="0 0 15 18"><path d="M1 3.3h13" stroke="#222" stroke-width="1.8"/><path d="M5 2.3l.6-1.3h3.8l.6 1.3" fill="#222" stroke="#222" stroke-width="1"/><rect x="2.8" y="6" width="9.4" height="10.5" rx="1" fill="none" stroke="#222" stroke-width="1.7"/></svg>
<div class="a" style="left:98.5px;top:552.1px;width:1845px;height:1px;background:#e9e9e9"></div>
<div class="t" style="left:115.5px;top:516.70px;font-size:16.3px;color:#363636;letter-spacing:0.377px;">Consultation Attended Open Opportunity</div>
<div class="t" style="left:609px;top:516.70px;font-size:16.3px;color:#363636;letter-spacing:0.327px;">Dynamic</div>
<div class="t" style="left:748.5px;top:516.70px;font-size:16.3px;color:#363636;letter-spacing:0.173px;">RSI Admin</div>
<div class="t" style="left:999.5px;top:516.70px;font-size:16.3px;color:#363636;letter-spacing:0.12px;">11/04/2025 1:22 PM</div>
<div class="t" style="left:1277.5px;top:516.70px;font-size:16.3px;color:#363636;letter-spacing:0.376px;">Amy Holdener</div>
<div class="t" style="left:1534px;top:516.70px;font-size:16.3px;color:#363636;letter-spacing:0.12px;">12/18/2025 10:48 AM</div>
<svg class="a" style="left:1876.5px;top:515.2px" width="20" height="21" viewBox="0 0 20 21"><path d="M1.5 14.5V2.5a1 1 0 0 1 1-1h9.5" fill="none" stroke="#2b2b2b" stroke-width="1.5"/><rect x="5.6" y="5.4" width="11.4" height="13.6" rx="1.3" fill="none" stroke="#111" stroke-width="1.7"/></svg>
<svg class="a" style="left:1910px;top:515.4px" width="15" height="18" viewBox="0 0 15 18"><path d="M1 3.3h13" stroke="#222" stroke-width="1.8"/><path d="M5 2.3l.6-1.3h3.8l.6 1.3" fill="#222" stroke="#222" stroke-width="1"/><rect x="2.8" y="6" width="9.4" height="10.5" rx="1" fill="none" stroke="#222" stroke-width="1.7"/></svg>
<div class="a" style="left:98.5px;top:605.5px;width:1845px;height:1px;background:#e9e9e9"></div>
<div class="t" style="left:115.5px;top:570.10px;font-size:16.3px;color:#363636;letter-spacing:0.355px;">New Inquiries</div>
<div class="t" style="left:609px;top:570.10px;font-size:16.3px;color:#363636;letter-spacing:0.327px;">Dynamic</div>
<div class="t" style="left:748.5px;top:570.10px;font-size:16.3px;color:#363636;letter-spacing:0.173px;">RSI Admin</div>
<div class="t" style="left:999.5px;top:570.10px;font-size:16.3px;color:#363636;letter-spacing:0.12px;">11/04/2025 10:42 AM</div>
<div class="t" style="left:1277.5px;top:570.10px;font-size:16.3px;color:#363636;letter-spacing:0.376px;">Amy Holdener</div>
<div class="t" style="left:1534px;top:570.10px;font-size:16.3px;color:#363636;letter-spacing:0.12px;">12/18/2025 10:46 AM</div>
<svg class="a" style="left:1876.5px;top:568.6px" width="20" height="21" viewBox="0 0 20 21"><path d="M1.5 14.5V2.5a1 1 0 0 1 1-1h9.5" fill="none" stroke="#2b2b2b" stroke-width="1.5"/><rect x="5.6" y="5.4" width="11.4" height="13.6" rx="1.3" fill="none" stroke="#111" stroke-width="1.7"/></svg>
<svg class="a" style="left:1910px;top:568.8px" width="15" height="18" viewBox="0 0 15 18"><path d="M1 3.3h13" stroke="#222" stroke-width="1.8"/><path d="M5 2.3l.6-1.3h3.8l.6 1.3" fill="#222" stroke="#222" stroke-width="1"/><rect x="2.8" y="6" width="9.4" height="10.5" rx="1" fill="none" stroke="#222" stroke-width="1.7"/></svg>
<div class="t" style="left:115.5px;top:623.50px;font-size:16.3px;color:#363636;letter-spacing:0.268px;">Outstanding Balance Over $95</div>
<div class="t" style="left:609px;top:623.50px;font-size:16.3px;color:#363636;letter-spacing:0.327px;">Dynamic</div>
<div class="t" style="left:748.5px;top:623.50px;font-size:16.3px;color:#363636;letter-spacing:0.173px;">RSI Admin</div>
<div class="t" style="left:999.5px;top:623.50px;font-size:16.3px;color:#363636;letter-spacing:0.12px;">10/24/2025 3:41 PM</div>
<div class="t" style="left:1277.5px;top:623.50px;font-size:16.3px;color:#363636;letter-spacing:0.376px;">Amy Holdener</div>
<div class="t" style="left:1534px;top:623.50px;font-size:16.3px;color:#363636;letter-spacing:0.12px;">12/18/2025 10:55 AM</div>
<svg class="a" style="left:1876.5px;top:622.0px" width="20" height="21" viewBox="0 0 20 21"><path d="M1.5 14.5V2.5a1 1 0 0 1 1-1h9.5" fill="none" stroke="#2b2b2b" stroke-width="1.5"/><rect x="5.6" y="5.4" width="11.4" height="13.6" rx="1.3" fill="none" stroke="#111" stroke-width="1.7"/></svg>
<svg class="a" style="left:1910px;top:622.2px" width="15" height="18" viewBox="0 0 15 18"><path d="M1 3.3h13" stroke="#222" stroke-width="1.8"/><path d="M5 2.3l.6-1.3h3.8l.6 1.3" fill="#222" stroke="#222" stroke-width="1"/><rect x="2.8" y="6" width="9.4" height="10.5" rx="1" fill="none" stroke="#222" stroke-width="1.7"/></svg>
<div class="a" style="left:178.5px;top:361px;width:1.3px;height:14px;background:#222"></div>
<svg class="a" style="left:165px;top:368px" width="16" height="12" viewBox="0 0 16 12"><path d="M1.5 2a6.5 6.5 0 0 0 13 0" fill="none" stroke="#c8c8c8" stroke-width="1"/></svg>
<div class="a" style="left:98.5px;top:967px;width:1845px;height:1px;background:#e6e6e6"></div>
<div class="t" style="left:1378px;top:989.86px;font-size:16px;color:#444;letter-spacing:0.965px;">Items per page:</div>
<div class="a" style="left:1511px;top:977.5px;width:86px;height:40.5px;border:1px solid #c9c9c9;border-radius:4px;background:#fff"></div>
<div class="t" style="left:1527px;top:989.86px;font-size:16px;color:#333;letter-spacing:-0.117px;">10</div>
<svg class="a" style="left:1570px;top:995.5px" width="11" height="6" viewBox="0 0 11 6"><path d="M0.5 0.5h10L5.5 5.5z" fill="#555"/></svg>
<div class="t" style="left:1633.7px;top:989.86px;font-size:16px;color:#444;letter-spacing:0.673px;">1 – 6 of 6</div>
<svg class="a" style="left:1755px;top:989px" width="16" height="16" viewBox="0 0 16 16"><path d="M2 2v12M12 2.5L6.5 8l5.5 5.5" fill="none" stroke="#e4e4e4" stroke-width="1.8"/></svg>
<svg class="a" style="left:1805px;top:989px" width="16" height="16" viewBox="0 0 16 16"><path d="M10.5 2.5L5 8l5.5 5.5" fill="none" stroke="#e4e4e4" stroke-width="1.8"/></svg>
<svg class="a" style="left:1854px;top:989px" width="16" height="16" viewBox="0 0 16 16"><path d="M5.5 2.5L11 8l-5.5 5.5" fill="none" stroke="#e4e4e4" stroke-width="1.8"/></svg>
<svg class="a" style="left:1902px;top:989px" width="16" height="16" viewBox="0 0 16 16"><path d="M14 2v12M4 2.5L9.5 8 4 13.5" fill="none" stroke="#e4e4e4" stroke-width="1.8"/></svg>
<div class="a" style="left:25.5px;top:989.5px;width:48px;height:48.5px;border-radius:9px;background:#1f2023"></div>
<svg class="a" style="left:38px;top:1006px" width="24" height="17" viewBox="0 0 24 17"><rect x="1.2" y="1.5" width="14" height="13.5" rx="2" fill="none" stroke="#f2f2f2" stroke-width="2"/><path d="M15.5 6.5l6.5-3.5v11l-6.5-3.5" fill="none" stroke="#f2f2f2" stroke-width="2" stroke-linejoin="round"/></svg>
<div class="a" style="left:90.5px;top:987.5px;width:313px;height:52.5px;border-radius:15px;background:#222326"></div>
<div class="a" style="left:106.5px;top:996px;width:36px;height:38px;border-radius:11px;background:#e25c42"></div>
<div class="a" style="left:115.5px;top:1005px;width:19px;height:19px;border-radius:3px;background:#f8f3f2"></div>
<div class="a" style="left:157px;top:1005px;width:5px;height:14.5px;border-radius:1.5px;background:#eee"></div>
<div class="a" style="left:166.5px;top:1005px;width:5px;height:14.5px;border-radius:1.5px;background:#eee"></div>
<svg class="a" style="left:190px;top:1006px" width="23" height="13" viewBox="0 0 23 13"><path d="M11 1L1 6.5 11 12zM22 1L12 6.5 22 12z" fill="#eee" stroke="#eee" stroke-linejoin="round" stroke-width="1.5"/></svg>
<div class="t" style="left:230.5px;top:1005px;font-size:15px;font-weight:700;color:#eee;line-height:1;letter-spacing:0.9px">1:33</div>
<div class="a" style="left:280px;top:1001px;width:1px;height:24px;background:#3d3e42"></div>
<svg class="a" style="left:295px;top:1003px" width="20" height="20" viewBox="0 0 20 20"><circle cx="1.7" cy="8.0" r="1.15" fill="#eee"/><circle cx="1.7" cy="13.7" r="1.15" fill="#eee"/><circle cx="6.6" cy="2.8" r="1.15" fill="#eee"/><circle cx="6.6" cy="8.0" r="1.9" fill="#eee"/><circle cx="6.6" cy="13.7" r="1.9" fill="#eee"/><circle cx="6.6" cy="19.0" r="1.15" fill="#eee"/><circle cx="12.1" cy="2.8" r="1.15" fill="#eee"/><circle cx="12.1" cy="8.0" r="1.9" fill="#eee"/><circle cx="12.1" cy="13.7" r="1.9" fill="#eee"/><circle cx="12.1" cy="19.0" r="1.15" fill="#eee"/><circle cx="17.3" cy="8.0" r="1.15" fill="#eee"/><circle cx="17.3" cy="13.7" r="1.15" fill="#eee"/></svg>
<svg class="a" style="left:328px;top:1004px" width="19" height="19" viewBox="0 0 19 19"><path d="M4 5.5A6.8 6.8 0 1 1 2.8 10" fill="none" stroke="#eee" stroke-width="1.8"/><path d="M2 2.5v4.5h4.5" fill="none" stroke="#eee" stroke-width="1.8"/></svg>
<svg class="a" style="left:361px;top:1003px" width="19" height="22" viewBox="0 0 19 22"><path d="M1 4.5h17M6.5 4V1.5h6V4" fill="none" stroke="#eee" stroke-width="2"/><path d="M3 5l1 15.5h11L16 5" fill="none" stroke="#eee" stroke-width="2"/><path d="M7.5 8v9M11.5 8v9" stroke="#eee" stroke-width="1.8"/></svg>
<div class="a" style="left:119px;top:1017px;width:189.5px;height:40px;border-radius:3px 3px 0 0;background:#5b31e0"></div>
<svg class="a" style="left:133px;top:1030px" width="15" height="16" viewBox="0 0 15 16"><path d="M7.5 1L14 15l-6.5-3.5L1 15z" fill="#fff"/></svg>
<div class="t" style="left:153px;top:1031.60px;font-size:14.3px;color:#fff;font-weight:700;letter-spacing:0.065px;">Feedback &amp; Support</div>
</body></html>
